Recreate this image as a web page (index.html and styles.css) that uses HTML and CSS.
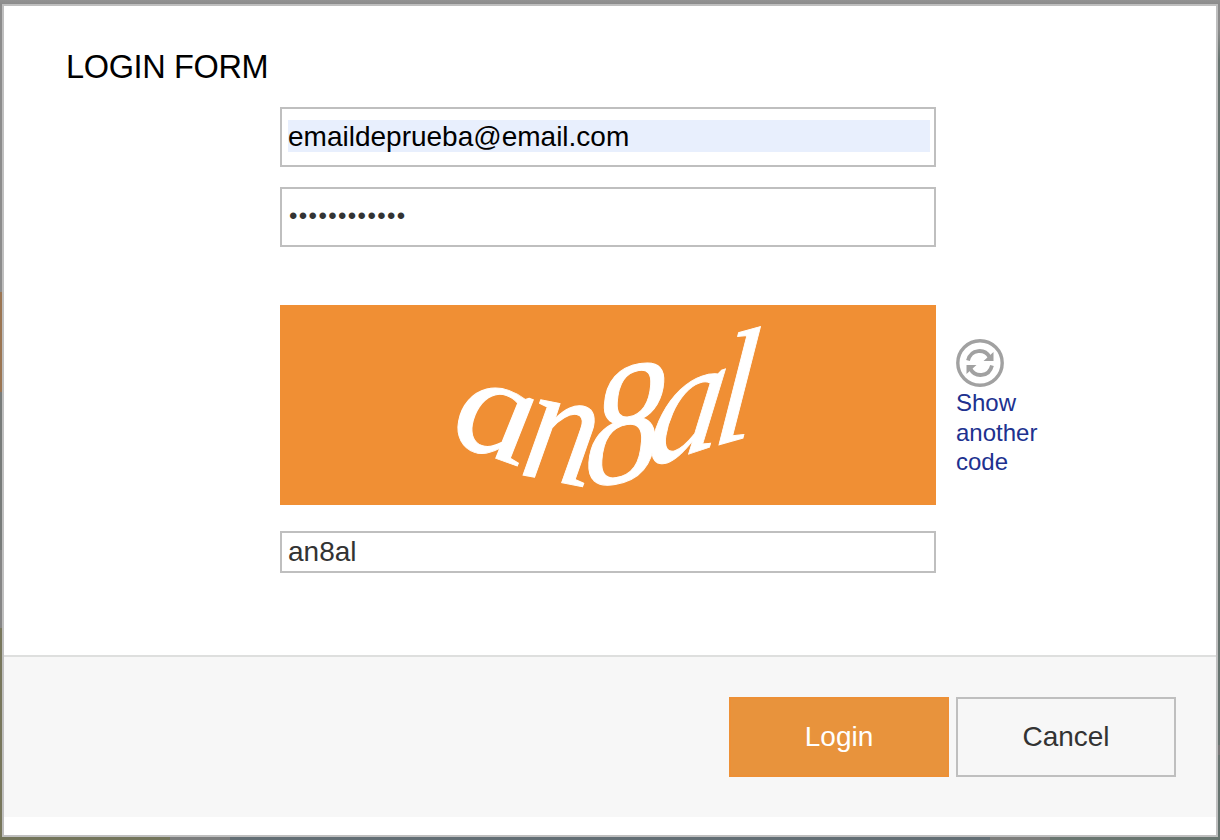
FILE: index.html
```html
<!DOCTYPE html>
<html lang="en">
<head>
<meta charset="utf-8">
<title>Login form</title>
<link rel="stylesheet" href="styles.css">
</head>
<body>
<main class="dialog">
  <form class="form">
    <h1 class="title">LOGIN FORM</h1>
    <div class="fields">
      <div class="field tall autofill"><span class="value">emaildeprueba@email.com</span></div>
      <div class="field tall password">••••••••••••</div>
      <div class="captcha-row">
        <svg class="captcha" viewBox="280 305 656 200">
          <text transform="matrix(1.54 .55 -.26 1.45 450 442)">a</text>
          <text transform="matrix(1.42 .28 -.32 1.65 518 474)">n</text>
          <text transform="matrix(1.5 -.25 -.12 1.75 584 488)">8</text>
          <text transform="matrix(1.5 -.5 -.26 1.65 644 469)">a</text>
          <text transform="matrix(1.5 -.42 -.16 1.58 711 447)">l</text>
        </svg>
        <a class="refresh">
          <svg class="refresh-icon" viewBox="0 0 48 48">
            <circle cx="24" cy="24" r="22.200" fill="none" stroke="#a1a1a1" stroke-width="3.400"/>
            <g fill="none" stroke="#a1a1a1" stroke-width="3.800">
              <path d="M12 21.500C15 9.500 29 9.500 33.500 18"/>
              <path d="M36 26.500C33 38.500 19 38.500 14.500 30"/>
            </g>
            <path fill="#a1a1a1" d="M37.500 13V22H27.500ZM10.500 35V26H20.500Z"/>
          </svg>
          <span class="refresh-label">Show another code</span>
        </a>
      </div>
      <div class="field short">an8al</div>
    </div>
  </form>
  <footer class="actions">
    <button class="button primary">Login</button>
    <button class="button">Cancel</button>
  </footer>
</main>
</body>
</html>
```
FILE: styles.css
```css
* { box-sizing: border-box; }
body {
  margin: 0;
  height: 840px;
  padding: 4px 2px 3px;
  overflow: hidden;
  font-family: "Liberation Sans", Arial, sans-serif;
  color: #333;
  background:
    linear-gradient(90deg, #73755a 0 170px, #7b7d7d 170px 230px, #626e74 230px 990px, #7c7d7b 990px 1050px, #697670 1050px) 0 100% / 100% 4px no-repeat,
    linear-gradient(#929292, #8b8b8b) 0 0 / 100% 5px no-repeat,
    linear-gradient(#8c8c8c 0 292px, #9b7552 292px 392px, #777b79 392px 550px, #858585 550px 628px, #77765b 628px) 0 0 / 3px 100% no-repeat,
    linear-gradient(#8c8c8c 0 30px, #66736f 60px 745px, #777 745px 755px, #66736f 755px) 100% 0 / 3px 100% no-repeat;
}
.dialog {
  height: 833px;
  border: 2px solid #bfbfbf;
  background: #fff;
}
.form {
  height: 649px;
  padding: 41px 0 0 62px;
}
.title {
  margin: 0;
  height: 60px;
  font-size: 32.5px;
  font-weight: 400;
  line-height: 40px;
  letter-spacing: -.35px;
  color: #000;
}
.fields { margin-left: 214px; }
.field {
  width: 656px;
  border: 2px solid #bfbfbf;
  font-size: 28px;
  line-height: 32px;
}
.tall {
  height: 60px;
  margin-bottom: 20px;
  padding: 11px 4px 13px 6px;
}
.autofill {
  color: #000;
  background: #e8effd content-box;
}
.value {
  display: block;
  padding-top: 1px;
}
.password {
  padding-left: 7px;
  font-size: 24px;
  letter-spacing: 1.4px;
}
.captcha-row {
  display: flex;
  gap: 20px;
  margin-top: 58px;
}
.captcha {
  width: 656px;
  height: 200px;
  background: #f08f34;
  fill: #fff;
  stroke: #fff;
  stroke-width: .6px;
  font: italic 100px "Liberation Serif", serif;
}
.refresh {
  display: flex;
  flex-direction: column;
  width: 100px;
  padding-top: 34px;
  font-size: 24px;
  line-height: 29.6px;
  color: #20318f;
}
.refresh-label { margin-top: 1px; }
.refresh-icon {
  width: 48px;
  height: 48px;
}
.short {
  height: 42px;
  margin-top: 26px;
  padding: 3px 6px;
}
.actions {
  display: flex;
  justify-content: flex-end;
  align-items: flex-start;
  gap: 7px;
  height: 162px;
  padding: 40px 40px 0 0;
  border-top: 2px solid #dedfde;
  background: #f7f7f7;
}
.button {
  width: 220px;
  height: 80px;
  padding: 0;
  border: 2px solid #bfbfbf;
  background: #f7f7f7;
  font: 28px "Liberation Sans", Arial, sans-serif;
  color: #333;
}
.primary {
  border-color: #ed9036;
  background: #e8933c;
  color: #fff;
}
```
